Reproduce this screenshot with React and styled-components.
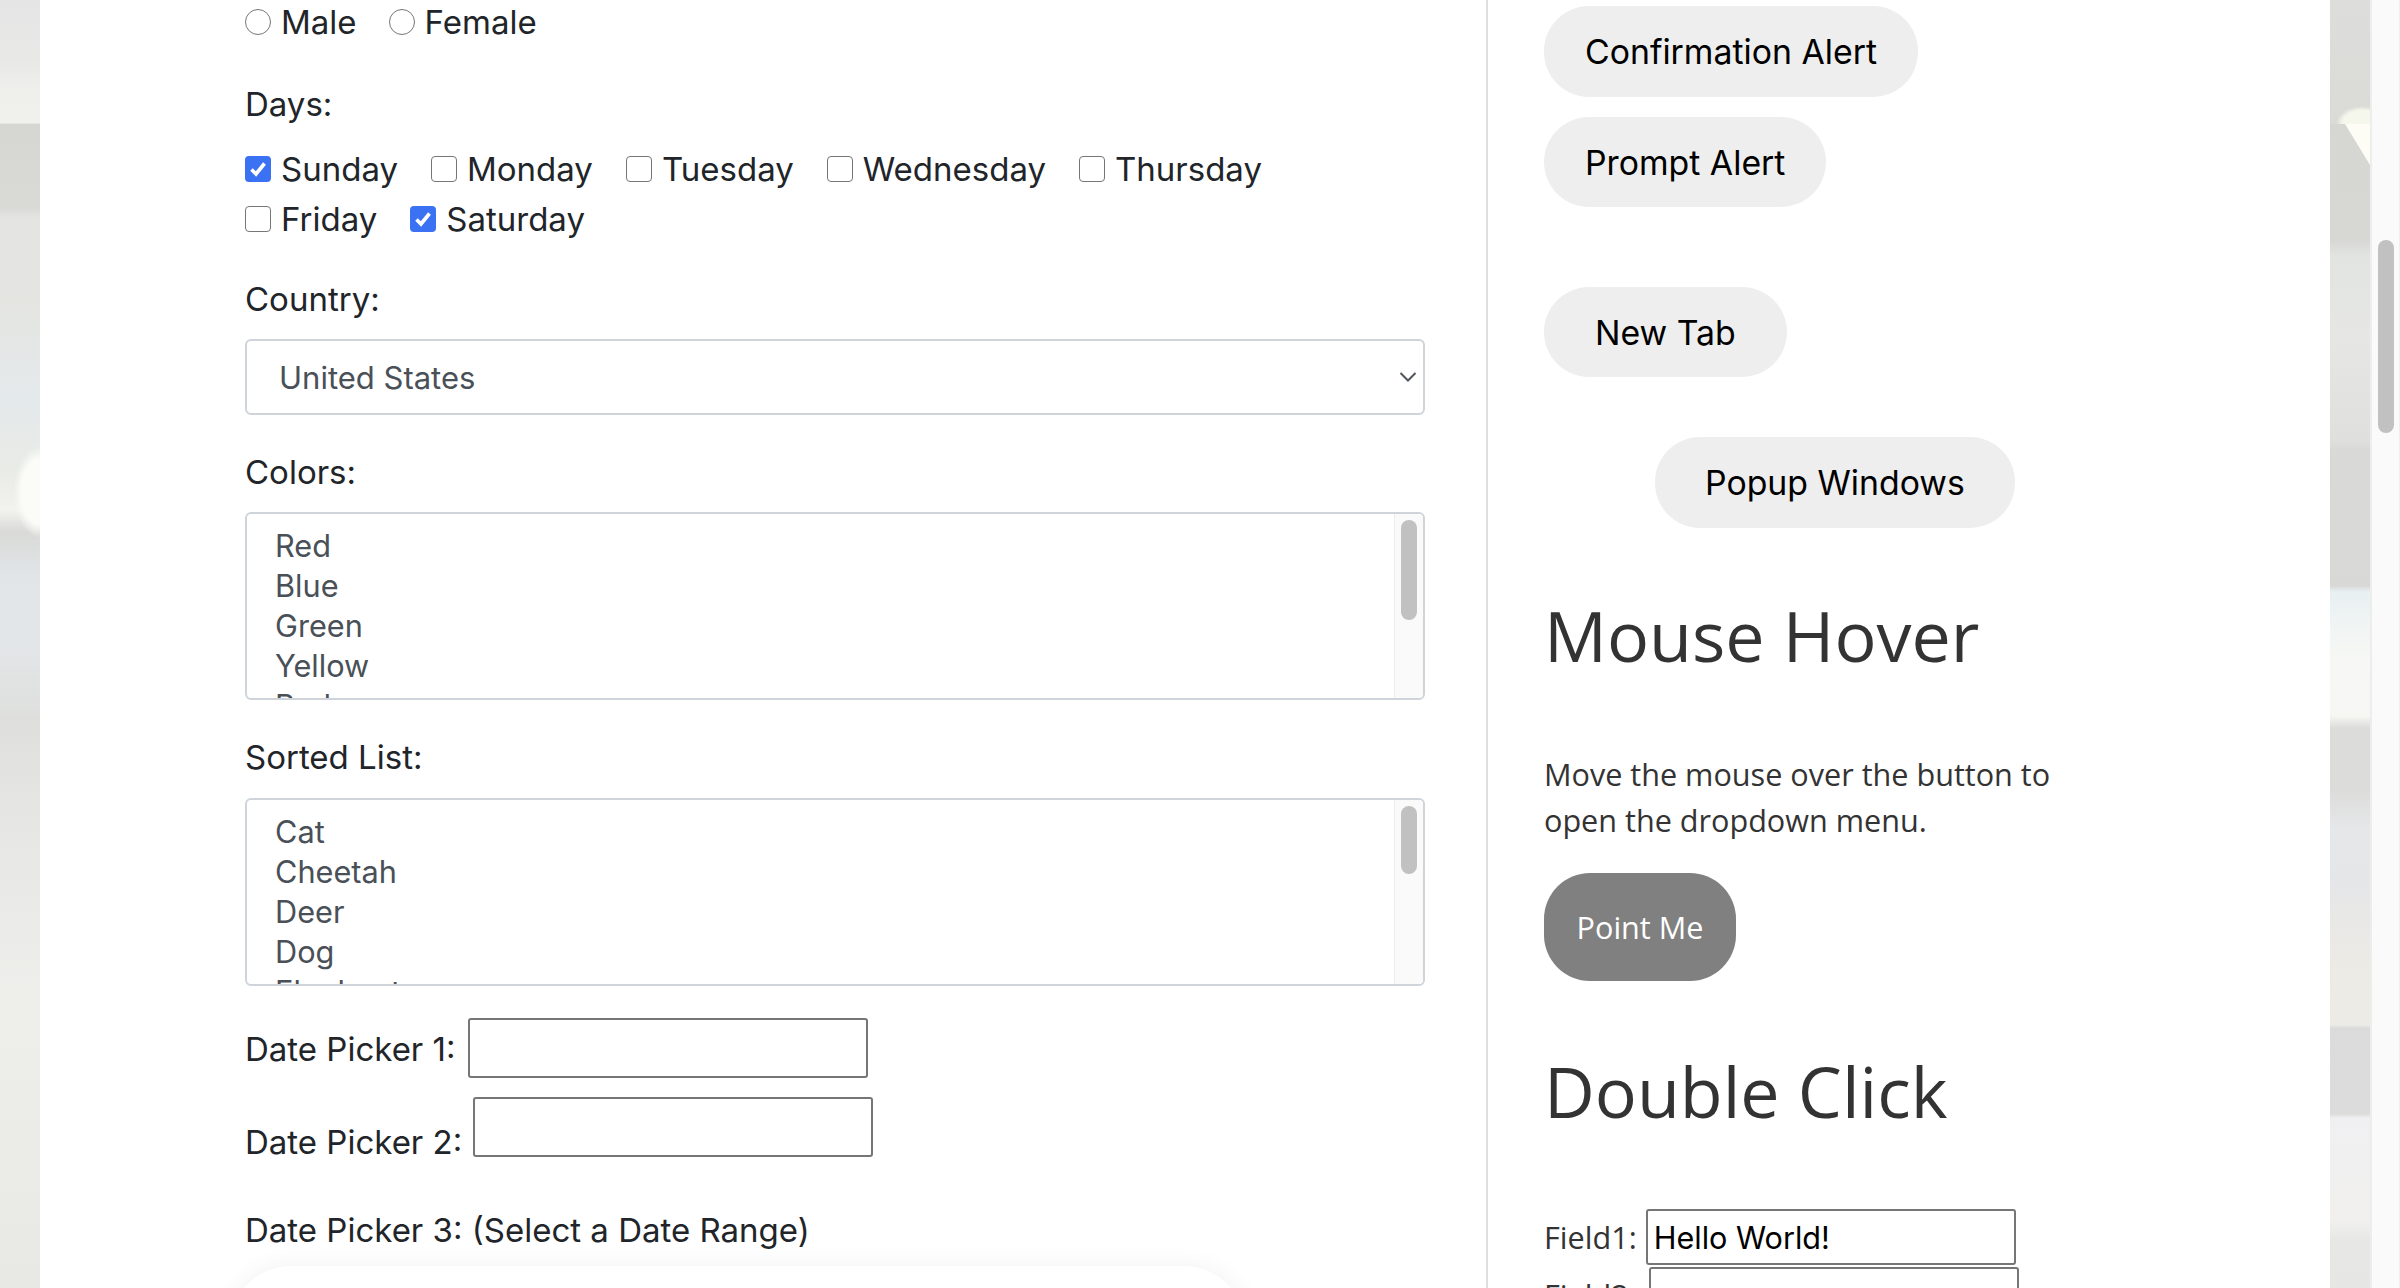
import React from "react";
import styled, { createGlobalStyle } from "styled-components";

const GlobalStyle = createGlobalStyle`
  html, body {
    margin: 0;
    height: 100%;
    overflow: hidden;
  }
  body {
    font-family: Inter, "Liberation Sans", sans-serif;
    color: #212529;
    background: #fff;
  }
`;

const Page = styled.div`
  display: flex;
  height: 1288px;
  overflow: hidden;
`;

// blurred photo behind the panel, only the two side strips show
const Backdrop = styled.div`
  flex: 1;
  display: flex;
  padding: 0 40px;
  background-repeat: no-repeat;
  background-image:
    radial-gradient(26px 46px at 40px 492px, #fbfcf8 70%, rgba(251, 252, 248, 0) 100%),
    linear-gradient(180deg, #e4e5e4 0, #e8e9e7 60px, #eff0ec 90px, #f0f0ec 123px, #d6d7d3 124px, #d9dad6 208px,
      #e4e5e3 218px, #e4e5e1 300px, #e4e9eb 400px, #e9ebe6 470px, #f2f2ee 510px, #d9dad7 532px, #e1e5e8 575px,
      #e3e6e8 640px, #dedfdd 720px, #e5e6e3 800px, #eeefeb 1000px, #e8e9e5 1288px),
    linear-gradient(to top right, rgba(253, 253, 246, 0) 49%, #fdfdf6 51%),
    radial-gradient(26px 18px at 32px 124px, #f6f7ec 75%, rgba(246, 247, 236, 0) 100%),
    radial-gradient(26px 54px at 2330px 392px, #fbfbf3 75%, rgba(251, 251, 243, 0) 100%),
    linear-gradient(180deg, #dddddb 0, #dadad6 123px, #d6d7d3 124px, #d7d8d4 240px,
      #e2e4e2 256px, #e6e7e4 340px, #dfe0dd 440px, #d9dad8 450px, #d8d9d7 586px, #e9f0f2 592px, #f7f8f5 660px,
      #f6f7f3 716px, #dcdcda 728px, #dcdcdb 790px, #e6e7e9 830px, #e5e6e8 880px, #eceae5 960px, #ecebe6 1025px,
      #dbdbdb 1028px, #dcdcdc 1114px, #f0f0f2 1118px, #f1f0ee 1220px, #e7e7e5 1240px, #e6e6e4 1288px);
  background-size: 40px 1288px, 40px 1288px, 25px 41px, 40px 124px, 40px 1288px, 40px 1288px;
  background-position: 0 0, 0 0, 2345px 124px, 2330px 0, 100% 0, 100% 0;
`;

const Panel = styled.main`
  flex: 1;
  display: flex;
  background: #fff;
  min-width: 0;
`;

const LeftColumn = styled.section`
  width: 1180px;
  margin: 0 61px 0 205px;
  flex-shrink: 0;
`;

const RightColumn = styled.aside`
  flex: 1;
  border-left: 2px solid #dfdfdf;
  padding: 6px 0 0 56px;
`;

const Row = styled.div`
  display: flex;
  align-items: center;
  gap: ${(p) => p.$gap}px;
  height: ${(p) => p.$height || 50}px;
`;

const Choice = styled.label`
  display: flex;
  align-items: center;
  gap: 10px;
  font-size: 33px;
  line-height: 36px;
  white-space: nowrap;
`;

const RadioMark = styled.span`
  width: 26px;
  height: 26px;
  box-sizing: border-box;
  border: 1.5px solid #767676;
  border-radius: 50%;
  background: #fff;
`;

const CheckMark = styled.span`
  width: 26px;
  height: 26px;
  box-sizing: border-box;
  border: ${(p) => (p.$checked ? "none" : "1.5px solid #767676")};
  border-radius: 4px;
  background: ${(p) => (p.$checked ? "#3b71f3" : "#fff")};
  display: flex;
  align-items: center;
  justify-content: center;
`;

const Label = styled.div`
  font-size: 33px;
  line-height: 36px;
  margin-top: ${(p) => p.$top || 0}px;
  margin-bottom: ${(p) => p.$bottom || 0}px;
`;

const SelectBox = styled.div`
  height: 76px;
  box-sizing: border-box;
  border: 2px solid #ced4da;
  border-radius: 6px;
  display: flex;
  align-items: center;
  justify-content: space-between;
  padding: 0 6px 0 32px;
  font-size: 31px;
  color: #495057;
`;

const ListBox = styled.div`
  position: relative;
  height: 188px;
  box-sizing: border-box;
  border: 2px solid #ced4da;
  border-radius: 6px;
  overflow: hidden;
  padding: 12px 0 0 28px;
  font-size: 30.7px;
  line-height: 40px;
  color: #495057;
`;

const ListItem = styled.div`
  height: 40px;
`;

const ListTrack = styled.div`
  position: absolute;
  top: 0;
  right: 0;
  bottom: 0;
  width: 28px;
  background: #fafafa;
  border-left: 1px solid #eee;
`;

const ListThumb = styled.div`
  position: absolute;
  top: 6px;
  left: 6px;
  width: 16px;
  height: ${(p) => p.$height}px;
  border-radius: 8px;
  background: #c1c1c1;
`;

const DateRow = styled.div`
  display: flex;
  align-items: flex-end;
  gap: ${(p) => p.$gap}px;
  font-size: 33px;
  margin-top: ${(p) => p.$top}px;
`;

const DateInput = styled.input`
  width: 400px;
  height: 60px;
  box-sizing: border-box;
  border: 2px solid #767676;
  border-radius: 3px;
  background: #fff;
  margin-bottom: ${(p) => p.$bottom || 0}px;
`;

const DateText = styled.span`
  line-height: 36px;
  padding-bottom: ${(p) => p.$bottom || 0}px;
`;

const RangeCard = styled.div`
  width: 1019px;
  height: 400px;
  margin: 18px 0 0 -17px;
  border-radius: 64px;
  background: #fff;
  box-shadow: 0 0 26px rgba(0, 0, 0, 0.06);
`;

const PillButton = styled.button`
  display: block;
  height: ${(p) => p.$height}px;
  padding: 0 ${(p) => p.$pad}px;
  margin: ${(p) => p.$top || 0}px 0 0 ${(p) => p.$left || 0}px;
  border: none;
  border-radius: 45px;
  background: #eee;
  color: #000;
  font-family: Inter, "Liberation Sans", sans-serif;
  font-size: 33.8px;
`;

const Heading = styled.h2`
  margin: ${(p) => p.$top}px 0 ${(p) => p.$bottom}px;
  font-family: "Open Sans", "Noto Sans", sans-serif;
  font-size: 70px;
  font-weight: 400;
  line-height: 96px;
  color: #333;
`;

const Paragraph = styled.p`
  margin: 0;
  width: 540px;
  font-family: "Open Sans", "Noto Sans", sans-serif;
  font-size: 30.6px;
  line-height: 46px;
  color: #333;
`;

const HoverButton = styled.button`
  display: block;
  width: 192px;
  height: 108px;
  margin-top: 30px;
  border: none;
  border-radius: 46px;
  background: #808080;
  color: #fff;
  font-family: "Open Sans", "Noto Sans", sans-serif;
  font-size: 30.6px;
`;

const FieldRow = styled.div`
  display: flex;
  align-items: center;
  gap: ${(p) => p.$gap}px;
  font-family: "Open Sans", "Noto Sans", sans-serif;
  font-size: 30.6px;
  color: #333;
  height: 58px;
`;

const FieldInput = styled.input`
  width: 370px;
  height: 56px;
  box-sizing: border-box;
  border: 2px solid #767676;
  border-radius: 3px;
  padding: 0 6px;
  color: #000;
  font-family: Inter, "Liberation Sans", sans-serif;
  font-size: 30.6px;
`;

const Scrollbar = styled.div`
  position: relative;
  width: 30px;
  flex-shrink: 0;
  background: #fafafa;
  border-left: 2px solid #ededed;
  border-right: 1px solid #eee;
  box-sizing: border-box;
`;

const ScrollThumb = styled.div`
  position: absolute;
  top: 240px;
  left: 6px;
  width: 16px;
  height: 193px;
  border-radius: 8px;
  background: #c1c1c1;
`;

const colors = ["Red", "Blue", "Green", "Yellow", "Red", "White", "Green"];
const animals = ["Cat", "Cheetah", "Deer", "Dog", "Elephant", "Fox", "Giraffe"];
const daysTop = ["Sunday", "Monday", "Tuesday", "Wednesday", "Thursday"];
const daysBottom = ["Friday", "Saturday"];
const checkedDays = ["Sunday", "Saturday"];

function DayChoice({ name }) {
  const checked = checkedDays.includes(name);
  return (
    <Choice>
      <CheckMark $checked={checked}>
        {checked && (
          <svg width="20" height="20" viewBox="0 0 20 20" fill="none">
            <path d="M3.5 10.5 8 15 16.5 4.5" stroke="#fff" strokeWidth="3.6" />
          </svg>
        )}
      </CheckMark>
      {name}
    </Choice>
  );
}

function Listing({ items, thumb }) {
  return (
    <ListBox>
      {items.map((item, i) => (
        <ListItem key={i}>{item}</ListItem>
      ))}
      <ListTrack>
        <ListThumb $height={thumb} />
      </ListTrack>
    </ListBox>
  );
}

export default function App() {
  return (
    <Page>
      <GlobalStyle />
      <Backdrop>
        <Panel>
          <LeftColumn>
            <Row $height={44} $gap={32}>
              <Choice>
                <RadioMark />
                Male
              </Choice>
              <Choice>
                <RadioMark />
                Female
              </Choice>
            </Row>
            <Label $top={42} $bottom={22}>Days:</Label>
            <Row $gap={33}>
              {daysTop.map((d) => (
                <DayChoice key={d} name={d} />
              ))}
            </Row>
            <Row $gap={33}>
              {daysBottom.map((d) => (
                <DayChoice key={d} name={d} />
              ))}
            </Row>
            <Label $top={37} $bottom={22}>Country:</Label>
            <SelectBox>
              United States
              <svg width="18" height="12" viewBox="0 0 18 12" fill="none">
                <path d="M1.5 2 9 9.5 16.5 2" stroke="#4f555b" strokeWidth="2" />
              </svg>
            </SelectBox>
            <Label $top={39} $bottom={22}>Colors:</Label>
            <Listing items={colors} thumb={100} />
            <Label $top={39} $bottom={23}>Sorted List:</Label>
            <Listing items={animals} thumb={68} />
            <DateRow $top={32} $gap={12}>
              <DateText $bottom={11}>Date Picker 1:</DateText>
              <DateInput />
            </DateRow>
            <DateRow $top={19} $gap={11}>
              <DateText>Date Picker 2:</DateText>
              <DateInput $bottom={3} />
            </DateRow>
            <Label $top={52}>Date Picker 3: (Select a Date Range)</Label>
            <RangeCard />
          </LeftColumn>
          <RightColumn>
            <PillButton $pad={41} $height={91}>Confirmation Alert</PillButton>
            <PillButton $pad={41} $height={90} $top={20}>Prompt Alert</PillButton>
            <PillButton $pad={51} $height={90} $top={80}>New Tab</PillButton>
            <PillButton $pad={50} $height={91} $top={60} $left={111}>Popup Windows</PillButton>
            <Heading $top={59} $bottom={68}>Mouse Hover</Heading>
            <Paragraph>Move the mouse over the button to open the dropdown menu.</Paragraph>
            <HoverButton>Point Me</HoverButton>
            <Heading $top={62} $bottom={69}>Double Click</Heading>
            <FieldRow $gap={9}>
              Field1:
              <FieldInput defaultValue="Hello World!" />
            </FieldRow>
            <FieldRow $gap={12}>
              Field2:
              <FieldInput />
            </FieldRow>
          </RightColumn>
        </Panel>
      </Backdrop>
      <Scrollbar>
        <ScrollThumb />
      </Scrollbar>
    </Page>
  );
}
